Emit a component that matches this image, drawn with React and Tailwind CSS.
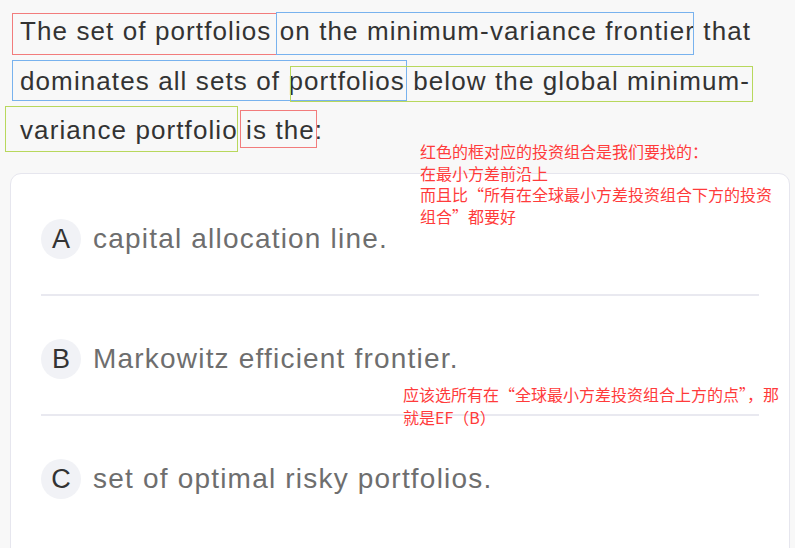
import React from 'react';

const latin = { fontFamily: '"Liberation Sans", Arial, "Noto Sans CJK SC", sans-serif' };
const cjk = { fontFamily: '"Noto Sans CJK SC", "Liberation Sans", sans-serif' };

// annotation rectangles drawn over the question text
const marks = [
  { cls: 'left-[12px] top-[13px] w-[265px] h-[42px] border-[#f27c7c]' },
  { cls: 'left-[276px] top-[12px] w-[418px] h-[43px] border-[#78b2ee]' },
  { cls: 'left-[12px] top-[60px] w-[395px] h-[41px] border-[#78b2ee]' },
  { cls: 'left-[290px] top-[66px] w-[463px] h-[36px] border-[#b8d85c]' },
  { cls: 'left-[5px] top-[106px] w-[233px] h-[46px] border-[#b8d85c]' },
  { cls: 'left-[240px] top-[110px] w-[77px] h-[38px] border-[#f27c7c]' },
];

const options = [
  { key: 'A', text: 'capital allocation line.' },
  { key: 'B', text: 'Markowitz efficient frontier.' },
  { key: 'C', text: 'set of optimal risky portfolios.' },
];

function Option({ letter, text, last }) {
  return (
    <div>
      <div className="flex items-center pt-[43px] pb-[35px]">
        <div className="w-10 h-10 rounded-full bg-[#f1f2f6] flex items-center justify-center text-[27px] leading-10 text-[#333]" style={latin}>
          {letter}
        </div>
        <div className="ml-[12px] text-[28px] leading-10 tracking-[1.2px] text-[#6e6e6e]" style={latin}>
          {text}
        </div>
      </div>
      {!last && <div className="h-[2px] bg-[#e9e9f0]" />}
    </div>
  );
}

export default function App() {
  return (
    <div className="relative w-[795px] h-[548px] overflow-hidden bg-[#f8f8f8]">
      <div className="pt-[7px] pl-[20px] text-[26px] leading-[49.5px] tracking-[1.1px] text-[#333]" style={latin}>
        The set of portfolios on the minimum-variance frontier that
        <br />
        dominates all sets of portfolios below the global minimum-
        <br />
        variance portfolio is the:
      </div>

      {marks.map((m, i) => (
        <div key={i} className={`absolute border-[1.5px] ${m.cls}`} />
      ))}

      <div className="mt-[17px] ml-[10px] mr-[5px] h-[400px] bg-white rounded-[11px] border border-[#e6e6ee] pl-[30px] pr-[30px] pt-[2px]">
        {options.map((o, i) => (
          <Option key={o.key} letter={o.key} text={o.text} last={i === options.length - 1} />
        ))}
      </div>

      <div className="absolute left-[420px] top-[141px] text-[16px] leading-[21.7px] text-[#ff3b3b]" style={cjk}>
        红色的框对应的投资组合是我们要找的：
        <br />
        在最小方差前沿上
        <br />
        而且比“所有在全球最小方差投资组合下方的投资
        <br />
        组合”都要好
      </div>

      <div className="absolute left-[403px] top-[383px] text-[16px] leading-[23px] text-[#ff3b3b]" style={cjk}>
        应该选所有在“全球最小方差投资组合上方的点”，那
        <br />
        就是EF（B）
      </div>
    </div>
  );
}
